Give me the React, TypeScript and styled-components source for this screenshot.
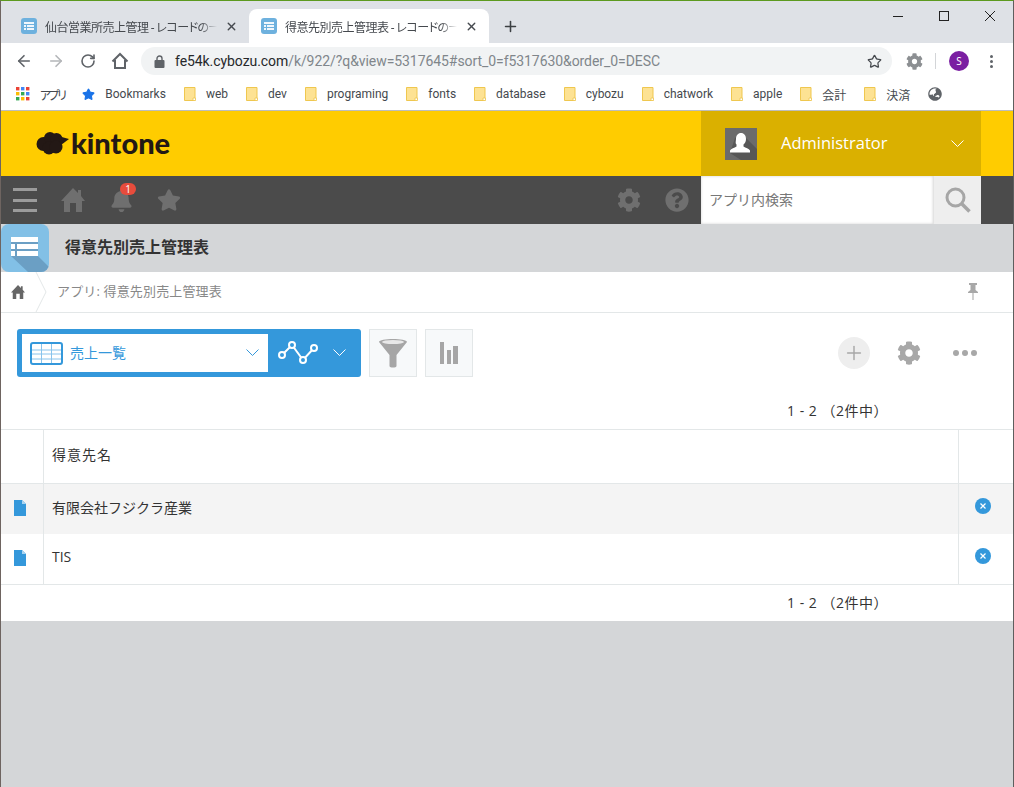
import React from 'react';
import styled, { createGlobalStyle } from 'styled-components';
import { ArrowLeft, ArrowRight, RotateCw, Star, X, Plus } from 'lucide-react';
import { FaBell, FaCog, FaQuestionCircle, FaStar, FaGlobeAsia } from 'react-icons/fa';

const GlobalStyle = createGlobalStyle`
  html, body {
    margin: 0;
    padding: 0;
    background: #fff;
  }
  body {
    font-family: "Noto Sans", "Noto Sans CJK JP", sans-serif;
  }
  svg {
    flex: none;
  }
`;

const JP = '"Open Sans", "Noto Sans CJK JP", sans-serif';
const CHROME = '"Roboto", "Noto Sans CJK JP", sans-serif';

const Window = styled.div`
  width: 1014px;
  height: 787px;
  box-sizing: border-box;
  display: flex;
  flex-direction: column;
  border-top: 1px solid #5c9a1f;
  border-left: 1px solid #6e6460;
  border-right: 1px solid #5e5e5e;
  overflow: hidden;
  background: #d4d6d8;
`;

/* browser chrome */
const TabBar = styled.div`
  height: 42px;
  flex: none;
  box-sizing: border-box;
  padding: 8px 0 0 8px;
  display: flex;
  background: #dee1e6;
`;

const Tab = styled.div<{ $active?: boolean }>`
  width: 240px;
  height: 34px;
  box-sizing: border-box;
  padding: 0 11px 0 12px;
  display: flex;
  align-items: center;
  gap: 8px;
  border-radius: 8px 8px 0 0;
  background: ${({ $active }) => ($active ? '#fff' : 'transparent')};
  color: #45494e;
  font-size: 12px;
  font-family: ${CHROME};
  font-feature-settings: "palt";
`;

const TabTitle = styled.span`
  flex: 1;
  min-width: 0;
  letter-spacing: -0.5px;
  white-space: nowrap;
  -webkit-mask-image: linear-gradient(90deg, #000 90%, transparent);
  mask-image: linear-gradient(90deg, #000 90%, transparent);
`;

const NewTab = styled.div`
  margin: 0 0 0 13px;
  height: 34px;
  display: flex;
  align-items: center;
  color: #3c4043;
`;

const WinControls = styled.div`
  margin-left: auto;
  margin-top: -8px;
  padding-right: 15px;
  height: 30px;
  display: flex;
  align-items: center;
  gap: 30px;
`;

const Toolbar = styled.div`
  height: 37px;
  flex: none;
  box-sizing: border-box;
  padding: 4px 0 5px 14px;
  display: flex;
  align-items: center;
  background: #fff;
`;

const NavIcon = styled.div<{ $faded?: boolean }>`
  width: 18px;
  margin-right: 14px;
  display: flex;
  justify-content: center;
  color: ${({ $faded }) => ($faded ? '#b4b6b9' : '#5f6368')};
`;

const UrlPill = styled.div`
  width: 751px;
  height: 28px;
  margin-left: -2px;
  box-sizing: border-box;
  padding: 0 10px 0 13px;
  display: flex;
  align-items: center;
  border-radius: 14px;
  background: #f1f3f4;
  color: #5f6368;
`;

const UrlText = styled.div`
  flex: 1;
  margin-left: 10px;
  font-family: "Roboto", sans-serif;
  font-size: 14px;
  letter-spacing: -0.07px;
  color: #80868b;
  white-space: nowrap;
`;

const UrlHost = styled.span`
  color: #26282b;
`;

const ToolExt = styled.div`
  margin-left: 12px;
  width: 20px;
  display: flex;
  justify-content: center;
  color: #8c8f92;
`;

const ToolDivider = styled.div`
  width: 1px;
  height: 16px;
  margin-left: 11px;
  background: #d3d5d8;
`;

const ProfileBadge = styled.div`
  width: 20px;
  height: 20px;
  margin-left: 13px;
  display: flex;
  align-items: center;
  justify-content: center;
  border-radius: 50%;
  background: #7b1fa2;
  color: #fff;
  font-size: 10px;
`;

const Kebab = styled.div`
  margin-left: 21px;
  display: flex;
  flex-direction: column;
  gap: 2px;
`;

const KebabDot = styled.span`
  width: 3px;
  height: 3px;
  border-radius: 50%;
  background: #5f6368;
`;

const Bookmarks = styled.div`
  height: 31px;
  flex: none;
  box-sizing: border-box;
  padding: 0 0 2px 15px;
  display: flex;
  align-items: center;
  background: #fff;
  border-bottom: 1px solid #bdbdbd;
`;

const Bookmark = styled.div<{ $narrow?: boolean }>`
  margin-right: 18px;
  display: flex;
  align-items: center;
  gap: 10px;
  color: #45494e;
  font-size: 12px;
  font-family: ${CHROME};
  font-feature-settings: "palt";
  letter-spacing: ${({ $narrow }) => ($narrow ? '-2.6px' : '0')};
  white-space: nowrap;
`;

/* kintone header */
const Header = styled.header`
  height: 65px;
  flex: none;
  padding-left: 35px;
  padding-right: 32px;
  display: flex;
  align-items: center;
  justify-content: space-between;
  background: #fc0;
`;

const Logo = styled.div`
  display: flex;
  align-items: center;
  gap: 2px;
  margin-bottom: 2px;
  color: #231815;
  font-family: "Lato", sans-serif;
  font-weight: 900;
  font-size: 29px;
  line-height: 1;
`;

const UserMenu = styled.div`
  width: 280px;
  height: 65px;
  box-sizing: border-box;
  padding: 0 17px 0 24px;
  display: flex;
  align-items: center;
  background: #dab000;
  color: #fff;
`;

const UserName = styled.span`
  flex: 1;
  margin: 0 0 2px 24px;
  font-family: "Open Sans", sans-serif;
  font-size: 16.5px;
`;

const NavBar = styled.nav`
  height: 48px;
  flex: none;
  padding-right: 32px;
  display: flex;
  align-items: center;
  background: #4b4b4b;
  color: #6f6f6f;
`;

const Hamburger = styled.div`
  width: 24px;
  margin-left: 12px;
  display: flex;
  flex-direction: column;
  gap: 7.5px;
`;

const HamburgerLine = styled.span`
  height: 3px;
  background: #9b9b9b;
`;

const NavIconSlot = styled.div`
  position: relative;
  width: 24px;
  height: 24px;
  margin-left: 24px;
  display: flex;
  align-items: center;
  justify-content: center;
`;

const Badge = styled.span`
  position: absolute;
  top: -5px;
  left: 11px;
  width: 16px;
  height: 12px;
  border-radius: 6px;
  background: #e74c3c;
  color: #fff;
  font-size: 10px;
  font-family: "Open Sans", sans-serif;
  line-height: 12px;
  text-align: center;
`;

const NavSpacer = styled.div`
  flex: 1;
`;

const SearchBox = styled.div`
  width: 280px;
  height: 48px;
  margin-left: 12px;
  display: flex;
`;

const SearchInput = styled.div`
  flex: 1;
  box-sizing: border-box;
  padding: 0 0 2px 8px;
  display: flex;
  align-items: center;
  background: #fff;
  color: #777;
  font-size: 14px;
  font-family: ${JP};
  box-shadow: inset 0 0 3px rgba(0, 0, 0, 0.18);
`;

const SearchButton = styled.div`
  width: 48px;
  display: flex;
  align-items: center;
  justify-content: center;
  background: #eee;
  border-left: 1px solid #e3e3e3;
  box-sizing: border-box;
`;

const AppTitleBar = styled.div`
  height: 48px;
  flex: none;
  display: flex;
  align-items: center;
  background: #d4d6d8;
`;

const AppTitle = styled.h1`
  margin: 0 0 5px 16px;
  font-size: 16px;
  font-weight: 700;
  color: #333;
  font-family: ${JP};
`;

/* content */
const Content = styled.main`
  flex: none;
  background: #fff;
`;

const Breadcrumb = styled.div`
  height: 41px;
  box-sizing: border-box;
  display: flex;
  align-items: center;
  padding-right: 33px;
  border-bottom: 1px solid #e3e7e8;
  color: #888;
  font-size: 13px;
  font-family: ${JP};
`;

const CrumbHome = styled.div`
  width: 34px;
  padding-left: 10px;
  box-sizing: border-box;
  display: flex;
`;

const CrumbText = styled.span`
  flex: 1;
  margin: 0 0 3px 10px;
  letter-spacing: 0.15px;
`;

const PinSlot = styled.div`
  display: flex;
  margin-bottom: 2px;
`;

const ViewBar = styled.div`
  height: 64px;
  box-sizing: border-box;
  padding: 16px 24px 0 16px;
  display: flex;
  align-items: flex-start;
`;

const ViewSelect = styled.div`
  width: 344px;
  height: 48px;
  box-sizing: border-box;
  padding: 5px;
  display: flex;
  border-radius: 3px;
  background: #3498db;
`;

const ViewSelectInner = styled.div`
  width: 246px;
  height: 38px;
  box-sizing: border-box;
  padding: 0 9px 0 8px;
  display: flex;
  align-items: center;
  background: #fff;
  color: #3498db;
  font-size: 14px;
  font-family: ${JP};
`;

const ViewName = styled.span`
  flex: 1;
  margin: 0 0 2px 7px;
`;

const GraphMenu = styled.div`
  flex: 1;
  padding-left: 10px;
  display: flex;
  align-items: center;
  gap: 15px;
`;

const SquareButton = styled.div`
  width: 48px;
  height: 48px;
  margin-left: 8px;
  box-sizing: border-box;
  display: flex;
  align-items: center;
  justify-content: center;
  border: 1px solid #e3e7e8;
  background: #f7f9fa;
`;

const ViewActions = styled.div`
  margin-left: auto;
  height: 48px;
  display: flex;
  align-items: center;
  color: #a8a8a8;
`;

const PlusCircle = styled.div`
  width: 32px;
  height: 32px;
  display: flex;
  align-items: center;
  justify-content: center;
  border-radius: 50%;
  background: #eee;
`;

const ActionGear = styled.div`
  margin-left: 27px;
  display: flex;
`;

const Dots = styled.div`
  margin-left: 32px;
  margin-right: 12px;
  display: flex;
  gap: 3px;
`;

const Dot = styled.span`
  width: 6px;
  height: 6px;
  border-radius: 50%;
  background: #a8a8a8;
`;

const Pager = styled.div<{ $height: number; $top?: number; $bottom?: number }>`
  height: ${({ $height }) => $height}px;
  box-sizing: border-box;
  padding: ${({ $top }) => $top ?? 0}px 0 ${({ $bottom }) => $bottom ?? 0}px 786px;
  display: flex;
  align-items: center;
  color: #333;
  font-size: 14px;
  font-family: ${JP};
  letter-spacing: 0.5px;
  white-space: pre;
`;

const Table = styled.div`
  border-top: 1px solid #e3e7e8;
  border-bottom: 1px solid #e3e7e8;
`;

const Row = styled.div<{ $height: number; $shaded?: boolean; $ruled?: boolean }>`
  height: ${({ $height }) => $height}px;
  box-sizing: border-box;
  display: grid;
  grid-template-columns: 42px 1fr 54px;
  background: ${({ $shaded }) => ($shaded ? '#f4f4f4' : '#fff')};
  border-bottom: ${({ $ruled }) => ($ruled ? '1px solid #e3e7e8' : 'none')};
`;

const Cell = styled.div<{ $spaced?: boolean }>`
  padding: 0 0 5px 8px;
  display: flex;
  align-items: center;
  color: #333;
  font-size: 14px;
  font-family: ${JP};
  letter-spacing: ${({ $spaced }) => ($spaced ? '1px' : '0')};
  border-left: 1px solid #e3e7e8;
  border-right: 1px solid #e3e7e8;
`;

const IconCell = styled.div`
  display: flex;
  align-items: center;
  justify-content: center;
  padding: 0 4px 2px 0;
`;

const DeleteCell = styled.div`
  display: flex;
  justify-content: center;
  padding-top: 14px;
  padding-right: 6px;
`;

const TabFavicon = () => (
  <svg width="16" height="16" viewBox="0 0 16 16">
    <rect width="16" height="16" rx="3" fill="#6eb1de" />
    <path d="M3 4h10v2H3zM3 7h2v2H3zM6 7h7v2H6zM3 10h2v2H3zM6 10h7v2H6z" fill="#fff" opacity=".9" />
  </svg>
);

const MinimizeGlyph = () => (
  <svg width="16" height="16" viewBox="0 0 16 16">
    <path d="M3 8.500h10" stroke="#222" />
  </svg>
);

const MaximizeGlyph = () => (
  <svg width="16" height="16" viewBox="0 0 16 16">
    <rect x="3.500" y="3.500" width="9" height="9" fill="none" stroke="#222" />
  </svg>
);

const CloseGlyph = () => (
  <svg width="16" height="16" viewBox="0 0 16 16">
    <path d="M3 3l10 10M13 3L3 13" stroke="#222" />
  </svg>
);

const BrowserHome = () => (
  <svg width="18" height="18" viewBox="0 0 18 18">
    <path d="M1.500 9.500L9 2l7.500 7.500M4 8v8h10V8" fill="none" stroke="#5f6368" strokeWidth="2" />
  </svg>
);

const LockGlyph = () => (
  <svg width="11" height="13" viewBox="0 0 11 13">
    <path d="M3 5V3.500a2.500 2.500 0 0 1 5 0V5" fill="none" stroke="#5f6368" strokeWidth="1.400" />
    <rect x="0.500" y="5" width="10" height="8" rx="1" fill="#5f6368" />
  </svg>
);

const AppsGrid = () => (
  <svg width="14" height="14" viewBox="0 0 14 14">
    {['#ea4335', '#4285f4', '#ea4335', '#fbbc04', '#34a853', '#4285f4', '#34a853', '#fbbc04', '#ea4335'].map((c, i) => (
      <rect key={i} x={(i % 3) * 5} y={Math.floor(i / 3) * 5} width="3.4" height="3.4" fill={c} />
    ))}
  </svg>
);

const Folder = () => (
  <svg width="12" height="14" viewBox="0 0 12 14">
    <path d="M.5.5h10.5v13H.5z" fill="#fde293" stroke="#efc74f" />
    <path d="M9 11h2.5v2.5H9z" fill="#fff" stroke="#efc74f" strokeWidth=".8" />
  </svg>
);

const Chevron = ({ color }: { color: string }) => (
  <svg width="13" height="8" viewBox="0 0 13 8">
    <polyline points="0.5,0.5 6.5,6.5 12.5,0.5" fill="none" stroke={color} />
  </svg>
);

const Cloud = () => (
  <svg width="33" height="24" viewBox="0 0 33 24" fill="#231815">
    <circle cx="7.500" cy="13" r="7" />
    <circle cx="14" cy="7" r="6" />
    <circle cx="20.500" cy="8" r="6" />
    <circle cx="13" cy="17" r="6.500" />
    <circle cx="20" cy="16" r="6.500" />
    <path d="M22 5l11 3-8 6z" />
  </svg>
);

const KintoneHome = ({ size, color }: { size: number; color: string }) => (
  <svg width={size} height={size} viewBox="0 0 24 24" fill={color}>
    <path d="M12 0l5 5V2h3v6l4 5h-3v11h-6v-9H9v9H3V13H0z" />
  </svg>
);

const Avatar = () => (
  <svg width="32" height="32" viewBox="0 0 32 32">
    <rect width="32" height="32" fill="#6b6b6b" />
    <path d="M10 10l6-5 16 16v11H16L5 25z" fill="#575757" />
    <path
      d="M16 5c3 0 5 2.500 5 6 0 2.500-1 4.500-2.500 5.500v2c2 1.500 5.500 2 6.500 4v2H5v-2c1-2 4.500-2.500 6.500-4v-2C10 15.500 11 13 11 11c0-3.500 2-6 5-6z"
      fill="#fff"
    />
  </svg>
);

const SearchGlyph = () => (
  <svg width="26" height="26" viewBox="0 0 26 26">
    <circle cx="10.500" cy="10.500" r="8.500" fill="none" stroke="#a6a6a6" strokeWidth="3" />
    <path d="M16.500 16.500l8 8" stroke="#a6a6a6" strokeWidth="3.500" />
  </svg>
);

const AppIcon = () => (
  <svg width="48" height="48" viewBox="0 0 48 48">
    <defs>
      <clipPath id="app-icon-clip">
        <rect width="48" height="48" rx="8" />
      </clipPath>
    </defs>
    <g clipPath="url(#app-icon-clip)">
      <rect width="48" height="48" fill="#82c0e6" />
      <path d="M37 14v18l16 16H27L10 32V14z" fill="#6b9fc4" />
      <path d="M10 13h27v5H10zM10 20h4v5h-4zM16 20h21v5H16zM10 27h4v5h-4zM16 27h21v5H16z" fill="#fff" />
    </g>
  </svg>
);

const Crumb = () => (
  <svg width="12" height="41" viewBox="0 0 12 41">
    <polyline points="1,0 11,20 1,40" fill="none" stroke="#e3e7e8" />
  </svg>
);

const Pin = () => (
  <svg width="14" height="18" viewBox="0 0 14 18">
    <path d="M3 1h8v2H9.500v5l2.500 2v1H2v-1l2.500-2V3H3z" fill="#a8a8a8" />
    <path d="M6.300 11h1.400v7H6.300z" fill="#bdbdbd" />
  </svg>
);

const TableGlyph = () => (
  <svg width="33" height="23" viewBox="0 0 33 23">
    <rect x="1" y="1" width="31" height="21" rx="2" fill="#fff" stroke="#3498db" strokeWidth="2" />
    <path d="M2 8h29M2 12h29M2 17h29M11.500 2v19M21.500 2v19" stroke="#88c4ec" />
  </svg>
);

const GraphGlyph = () => (
  <svg width="40" height="26" viewBox="0 0 40 26">
    <polyline points="4,15 14,5 25,20 36,8" fill="none" stroke="#fff" strokeWidth="2" />
    {[[4, 15], [14, 5], [25, 20], [36, 8]].map(([cx, cy]) => (
      <circle key={cx} cx={cx} cy={cy} r="3" fill="#3498db" stroke="#fff" strokeWidth="2" />
    ))}
  </svg>
);

const Funnel = () => (
  <svg width="30" height="30" viewBox="0 0 30 30">
    <path d="M1 4C1 0 29 0 29 4L18.500 17v11c0 2-7 2-7 0V17z" fill="#a6a6a6" />
    <ellipse cx="15" cy="4" rx="11" ry="2" fill="#e8e8e8" />
  </svg>
);

const Bars = () => (
  <svg width="18" height="22" viewBox="0 0 18 22">
    <path d="M0 0h4v22H0zM7 8h4v14H7zM13 4h5v18h-5z" fill="#a6a6a6" />
  </svg>
);

const RecordDoc = () => (
  <svg width="12" height="16" viewBox="0 0 12 16">
    <path d="M0 0h8l4 4v12H0z" fill="#3498db" />
    <path d="M8 0l4 4H8z" fill="#a9d4f1" />
  </svg>
);

const DeleteButton = () => (
  <svg width="16" height="16" viewBox="0 0 16 16">
    <circle cx="8" cy="8" r="8" fill="#3498db" />
    <path d="M5.500 5.500l5 5M10.500 5.500l-5 5" stroke="#fff" strokeWidth="1.200" />
  </svg>
);

const bookmarks = ['web', 'dev', 'programing', 'fonts', 'database', 'cybozu', 'chatwork', 'apple', '会計', '決済'];

const App: React.FC = () => (
  <>
    <GlobalStyle />
    <Window>
      <TabBar>
        <Tab>
          <TabFavicon />
          <TabTitle>仙台営業所売上管理 - レコードの一</TabTitle>
          <X size={13} strokeWidth={2.5} />
        </Tab>
        <Tab $active>
          <TabFavicon />
          <TabTitle>得意先別売上管理表 - レコードの一</TabTitle>
          <X size={13} strokeWidth={2.5} />
        </Tab>
        <NewTab>
          <Plus size={17} strokeWidth={2.2} />
        </NewTab>
        <WinControls>
          <MinimizeGlyph />
          <MaximizeGlyph />
          <CloseGlyph />
        </WinControls>
      </TabBar>
      <Toolbar>
        <NavIcon><ArrowLeft size={18} strokeWidth={2.2} /></NavIcon>
        <NavIcon $faded><ArrowRight size={18} strokeWidth={2.2} /></NavIcon>
        <NavIcon><RotateCw size={16} strokeWidth={2.4} /></NavIcon>
        <NavIcon><BrowserHome /></NavIcon>
        <UrlPill>
          <LockGlyph />
          <UrlText>
            <UrlHost>fe54k.cybozu.com</UrlHost>/k/922/?q&amp;view=5317645#sort_0=f5317630&amp;order_0=DESC
          </UrlText>
          <Star size={15} strokeWidth={2} color="#45494e" />
        </UrlPill>
        <ToolExt><FaCog size={17} /></ToolExt>
        <ToolDivider />
        <ProfileBadge>S</ProfileBadge>
        <Kebab><KebabDot /><KebabDot /><KebabDot /></Kebab>
      </Toolbar>
      <Bookmarks>
        <Bookmark $narrow><AppsGrid />アプリ</Bookmark>
        <Bookmark><Star size={13} fill="#1a73e8" color="#1a73e8" />Bookmarks</Bookmark>
        {bookmarks.map((name) => (
          <Bookmark key={name}><Folder />{name}</Bookmark>
        ))}
        <Bookmark><FaGlobeAsia size={14} color="#5f6368" /></Bookmark>
      </Bookmarks>

      <Header>
        <Logo><Cloud />kintone</Logo>
        <UserMenu>
          <Avatar />
          <UserName>Administrator</UserName>
          <Chevron color="#fff" />
        </UserMenu>
      </Header>
      <NavBar>
        <Hamburger><HamburgerLine /><HamburgerLine /><HamburgerLine /></Hamburger>
        <NavIconSlot><KintoneHome size={24} color="#6f6f6f" /></NavIconSlot>
        <NavIconSlot>
          <FaBell size={23} />
          <Badge>1</Badge>
        </NavIconSlot>
        <NavIconSlot><FaStar size={24} /></NavIconSlot>
        <NavSpacer />
        <NavIconSlot><FaCog size={24} /></NavIconSlot>
        <NavIconSlot><FaQuestionCircle size={24} /></NavIconSlot>
        <SearchBox>
          <SearchInput>アプリ内検索</SearchInput>
          <SearchButton><SearchGlyph /></SearchButton>
        </SearchBox>
      </NavBar>
      <AppTitleBar>
        <AppIcon />
        <AppTitle>得意先別売上管理表</AppTitle>
      </AppTitleBar>

      <Content>
        <Breadcrumb>
          <CrumbHome><KintoneHome size={14} color="#666" /></CrumbHome>
          <Crumb />
          <CrumbText>アプリ: 得意先別売上管理表</CrumbText>
          <PinSlot><Pin /></PinSlot>
        </Breadcrumb>
        <ViewBar>
          <ViewSelect>
            <ViewSelectInner>
              <TableGlyph />
              <ViewName>売上一覧</ViewName>
              <Chevron color="#3498db" />
            </ViewSelectInner>
            <GraphMenu>
              <GraphGlyph />
              <Chevron color="#fff" />
            </GraphMenu>
          </ViewSelect>
          <SquareButton><Funnel /></SquareButton>
          <SquareButton><Bars /></SquareButton>
          <ViewActions>
            <PlusCircle><Plus size={22} strokeWidth={1.6} /></PlusCircle>
            <ActionGear><FaCog size={24} /></ActionGear>
            <Dots><Dot /><Dot /><Dot /></Dots>
          </ViewActions>
        </ViewBar>
        <Pager $height={52} $top={14}>{'1 - 2 （2件中）'}</Pager>
        <Table>
          <Row $height={54} $ruled>
            <IconCell />
            <Cell $spaced>得意先名</Cell>
            <IconCell />
          </Row>
          <Row $height={50} $shaded>
            <IconCell><RecordDoc /></IconCell>
            <Cell>有限会社フジクラ産業</Cell>
            <DeleteCell><DeleteButton /></DeleteCell>
          </Row>
          <Row $height={50}>
            <IconCell><RecordDoc /></IconCell>
            <Cell>TIS</Cell>
            <DeleteCell><DeleteButton /></DeleteCell>
          </Row>
        </Table>
        <Pager $height={36} $bottom={2}>{'1 - 2 （2件中）'}</Pager>
      </Content>
    </Window>
  </>
);

export default App;
